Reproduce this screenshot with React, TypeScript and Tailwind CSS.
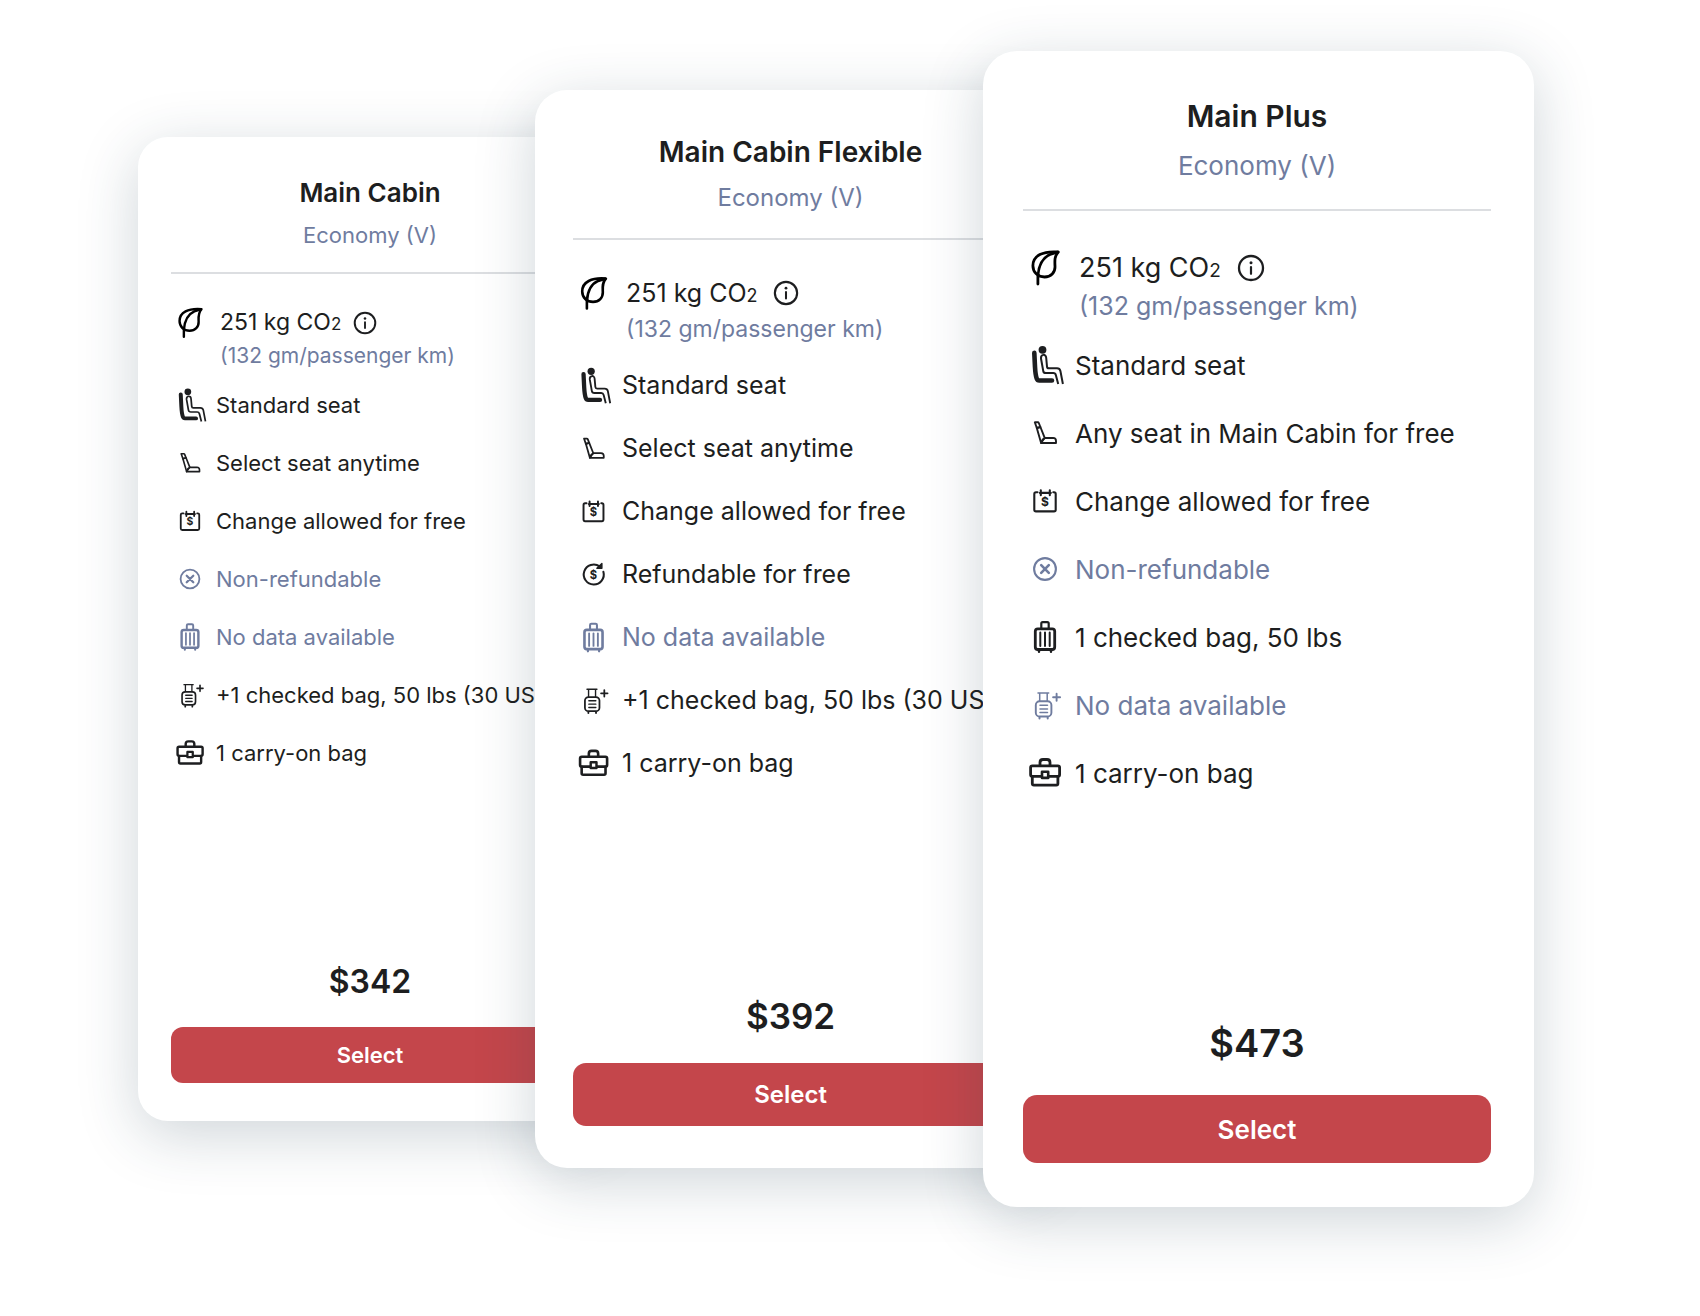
import React from 'react';

type IconName =
  | 'seat'
  | 'seatPick'
  | 'change'
  | 'refund'
  | 'noRefund'
  | 'checkedBag'
  | 'extraBag'
  | 'carryOn';

interface Feature {
  icon: IconName;
  label: string;
  muted?: boolean;
}

interface Fare {
  name: string;
  cabin: string;
  price: string;
  size: 'sm' | 'md' | 'lg';
  features: Feature[];
}

const FARES: Fare[] = [
  {
    name: 'Main Cabin',
    cabin: 'Economy (V)',
    price: '$342',
    size: 'sm',
    features: [
      { icon: 'seat', label: 'Standard seat' },
      { icon: 'seatPick', label: 'Select seat anytime' },
      { icon: 'change', label: 'Change allowed for free' },
      { icon: 'noRefund', label: 'Non-refundable', muted: true },
      { icon: 'checkedBag', label: 'No data available', muted: true },
      { icon: 'extraBag', label: '+1 checked bag, 50 lbs (30 USD)' },
      { icon: 'carryOn', label: '1 carry-on bag' },
    ],
  },
  {
    name: 'Main Cabin Flexible',
    cabin: 'Economy (V)',
    price: '$392',
    size: 'md',
    features: [
      { icon: 'seat', label: 'Standard seat' },
      { icon: 'seatPick', label: 'Select seat anytime' },
      { icon: 'change', label: 'Change allowed for free' },
      { icon: 'refund', label: 'Refundable for free' },
      { icon: 'checkedBag', label: 'No data available', muted: true },
      { icon: 'extraBag', label: '+1 checked bag, 50 lbs (30 USD)' },
      { icon: 'carryOn', label: '1 carry-on bag' },
    ],
  },
  {
    name: 'Main Plus',
    cabin: 'Economy (V)',
    price: '$473',
    size: 'lg',
    features: [
      { icon: 'seat', label: 'Standard seat' },
      { icon: 'seatPick', label: 'Any seat in Main Cabin for free' },
      { icon: 'change', label: 'Change allowed for free' },
      { icon: 'noRefund', label: 'Non-refundable', muted: true },
      { icon: 'checkedBag', label: '1 checked bag, 50 lbs' },
      { icon: 'extraBag', label: 'No data available', muted: true },
      { icon: 'carryOn', label: '1 carry-on bag' },
    ],
  },
];

// Each card is a step larger than the one it overlaps
const SIZES = {
  sm: {
    card: 'mt-[86px] -mr-[70px] rounded-[30px] pt-[35px] pb-[38px] pl-[33px] pr-[36px]',
    header: 'pb-4',
    title: 'text-[26px] leading-[42px]',
    cabin: 'text-[22px] leading-[42px]',
    co2: 'mt-8 mb-1 gap-[11px]',
    body: 'text-[23px] leading-[33px]',
    small: 'text-[21px] leading-[33px]',
    sub: 'text-[17px]',
    row: 'h-[58px] gap-[7px] text-[22px]',
    icon: 'size-[38px]',
    info: 'size-6 ml-3',
    price: 'mt-[179px] text-[32px] leading-[42px]',
    button: 'mt-6 h-14 rounded-xl text-[22px]',
  },
  md: {
    card: 'mt-[39px] -mr-[64px] rounded-[32px] pt-[39px] pb-[42px] pl-[38px] pr-[39px]',
    header: 'pb-[17px]',
    title: 'text-[28px] leading-[46px]',
    cabin: 'text-[24px] leading-[46px]',
    co2: 'mt-[35px] mb-[7px] gap-3',
    body: 'text-[25px] leading-[36px]',
    small: 'text-[23px] leading-[36px]',
    sub: 'text-[18px]',
    row: 'h-[63px] gap-2 text-[25px]',
    icon: 'size-[41px]',
    info: 'size-[26px] ml-[15px]',
    price: 'mt-[198px] text-[35px] leading-[46px]',
    button: 'mt-6 h-[63px] rounded-[13px] text-[24px]',
  },
  lg: {
    card: 'rounded-[34px] pt-10 pb-11 pl-10 pr-[43px]',
    header: 'pb-[18px]',
    title: 'text-[30px] leading-[50px]',
    cabin: 'text-[26px] leading-[50px]',
    co2: 'mt-[37px] mb-[5px] gap-3',
    body: 'text-[27px] leading-[39px]',
    small: 'text-[25px] leading-[39px]',
    sub: 'text-[19px]',
    row: 'h-[68px] gap-2 text-[26px]',
    icon: 'size-11',
    info: 'size-7 ml-4',
    price: 'mt-[211px] text-[38px] leading-[50px]',
    button: 'mt-[27px] h-[68px] rounded-[14px] text-[26px]',
  },
};

const ICONS: Record<IconName, React.ReactNode> = {
  seat: (
    <>
      <circle cx="19.5" cy="6.8" r="3.900" fill="currentColor" stroke="none" />
      <path d="M11.300 9.800 12 24c.3 5.500 1 9.500 1.700 11.500.5 1.400 1.200 2 2.500 2h12.800" strokeWidth="4.600" />
      <path
        d="M35.200 41l-2.300-8.800c-.4-1.500-1.200-2.100-2.600-2.100H23c-1.800 0-2.600-.7-2.800-2.300L18 15.500c-.4-4.500 4.900-4.900 5.200-.8l.8 8.900c.1 1.200.7 1.700 1.800 1.700h8.200c2 0 3 .9 3.400 2.700L39.900 41"
        strokeWidth="2"
        strokeLinecap="butt"
      />
    </>
  ),
  seatPick: (
    <g strokeWidth="1.900">
      <path d="M11.800 11.300h3c.5 0 .8.200 1 .700l1.600 4-3.600 1z" />
      <path d="M13.800 17l3.600-1 4.300 10.800-3.600 5.200z" />
      <path d="M18.100 32l1.500-3.400 2.500-1.600 7.900-.1c1.900.1 3 1.200 3 3V32z" />
    </g>
  ),
  change: (
    <>
      <path
        d="M14.500 13.200H13c-1 0-1.700.7-1.700 1.700v15.800c0 1 .7 1.700 1.700 1.700h18c1 0 1.700-.7 1.700-1.700V14.900c0-1-.7-1.700-1.700-1.700h-.7M17.800 11.300v4.900M26.800 11.300v4.900M16.900 13.900h10.900"
        strokeWidth="2.100"
      />
      <DollarSign />
    </>
  ),
  refund: (
    <>
      <path d="M32.600 19a10.730 10.730 0 1 1-4-5.700" strokeWidth="2.200" />
      <path d="M31 10.300v5h-5.400z" strokeWidth="1.500" fill="currentColor" />
      <DollarSign />
    </>
  ),
  noRefund: (
    <>
      <circle cx="22" cy="22" r="10.900" strokeWidth="2.100" />
      <path d="M18.200 18.200l7.600 7.600M25.800 18.200l-7.600 7.600" strokeWidth="2.600" />
    </>
  ),
  checkedBag: (
    <>
      <path d="M18.300 13V8.600c0-.9.500-1.400 1.400-1.400h4.600c.9 0 1.400.5 1.400 1.400V13" strokeWidth="2.200" />
      <rect x="12.300" y="13.800" width="19.400" height="20.700" rx="2.500" strokeWidth="2.800" />
      <path d="M17.300 17.500v13.500M22 17.500v13.500M26.700 17.500v13.500" strokeWidth="2" />
      <path d="M16 35.500v1.300M28 35.500v1.300" strokeWidth="2.400" />
    </>
  ),
  extraBag: (
    <>
      <path d="M15 10h10.700M16.700 10v8M24.200 10v8" strokeWidth="1.500" />
      <rect x="12.800" y="18.300" width="15.600" height="15.200" rx="3.800" strokeWidth="1.900" />
      <path d="M17 22.300h7.500M17 25.900h7.500M17 29.500h7.500" strokeWidth="1.500" />
      <path d="M16.500 34.500v1M24.700 34.500v1" strokeWidth="2" />
      <path d="M33.600 10.800v7M30.100 14.300h7" strokeWidth="1.900" />
    </>
  ),
  carryOn: (
    <>
      <path d="M17 14v-2.500C17 9.500 18 8.500 20 8.500h4c2 0 3 1 3 3V14" strokeWidth="2.800" />
      <rect x="7.600" y="14.800" width="29" height="10.500" rx="1.800" strokeWidth="2.800" />
      <path d="M9.300 25.500v7c0 1.100.6 1.600 1.600 1.600h22.400c1 0 1.600-.5 1.600-1.600v-7" strokeWidth="2.800" />
      <rect x="19" y="20.700" width="6.200" height="6.200" strokeWidth="2.600" fill="white" />
    </>
  ),
};

function DollarSign() {
  return (
    <text
      x="22"
      y="27"
      textAnchor="middle"
      fontSize="12"
      fontWeight="700"
      fill="currentColor"
      stroke="none"
    >
      $
    </text>
  );
}

interface IconProps {
  className: string;
  children: React.ReactNode;
}

const Icon: React.FC<IconProps> = ({ className, children }) => (
  <svg
    viewBox="0 0 44 44"
    fill="none"
    stroke="currentColor"
    strokeLinecap="round"
    strokeLinejoin="round"
    className={`shrink-0 ${className}`}
    aria-hidden="true"
  >
    {children}
  </svg>
);

const FareCard: React.FC<{ fare: Fare }> = ({ fare }) => {
  const s = SIZES[fare.size];

  return (
    <article
      className={`flex flex-col bg-white whitespace-nowrap shadow-[0_14px_60px_rgba(36,66,80,0.22)] ${s.card}`}
    >
      <header className={`text-center border-b-2 border-[#dcdee1] ${s.header}`}>
        <h2 className={`font-semibold ${s.title}`}>{fare.name}</h2>
        <p className={`text-[#6f7c9f] ${s.cabin}`}>{fare.cabin}</p>
      </header>

      {/* Emissions */}
      <div className={`flex items-start ${s.co2}`}>
        <div className={`flex h-[1lh] items-center ${s.body}`}>
          <Icon className={`text-black ${s.icon}`}>
            <path
              d="M35.300 6C20 4.800 9.900 9.500 9.900 19.800c0 6.500 5 11.200 11.600 11.200 6.500 0 10.700-4.500 10.500-10.500C31.800 15 31.200 10.500 35.300 6z"
              strokeWidth="2.800"
            />
            <path d="M14.900 38V30C15.600 20 19 12 27 8.500L34.500 6.200" strokeWidth="2.800" />
          </Icon>
        </div>
        <div>
          <p className={`flex items-center ${s.body}`}>
            <span>
              251 kg CO<span className={`leading-none ${s.sub}`}>2</span>
            </span>
            <button type="button" className={s.info} aria-label="Emissions details">
              <svg viewBox="0 0 28 28" fill="none" stroke="currentColor" strokeLinecap="round">
                <circle cx="14" cy="14" r="12" strokeWidth="2.300" />
                <path d="M14 13v6.800" strokeWidth="2.200" />
                <circle cx="14" cy="8.800" r="1.500" fill="currentColor" stroke="none" />
              </svg>
            </button>
          </p>
          <p className={`text-[#6f7c9f] ${s.small}`}>(132 gm/passenger km)</p>
        </div>
      </div>

      {/* Features */}
      <ul>
        {fare.features.map((feature) => (
          <li
            key={feature.icon}
            className={`flex items-center ${s.row} ${feature.muted ? 'text-[#6f7c9f]' : ''}`}
          >
            <Icon className={s.icon}>{ICONS[feature.icon]}</Icon>
            <span>{feature.label}</span>
          </li>
        ))}
      </ul>

      <p className={`text-center font-semibold ${s.price}`}>{fare.price}</p>
      <button
        type="button"
        className={`w-full bg-[#c4464b] font-semibold text-white cursor-pointer ${s.button}`}
      >
        Select
      </button>
    </article>
  );
};

const App: React.FC = () => {
  return (
    <main className="min-h-screen overflow-hidden bg-white pt-[51px] pb-[108px] pl-[138px] pr-[166px] font-['Inter','Liberation_Sans',sans-serif] text-[#1d1e20]">
      <div className="grid grid-cols-[minmax(0,397fr)_minmax(0,448fr)_minmax(0,551fr)] items-start">
        {FARES.map((fare) => (
          <FareCard key={fare.name} fare={fare} />
        ))}
      </div>
    </main>
  );
};

export default App;
